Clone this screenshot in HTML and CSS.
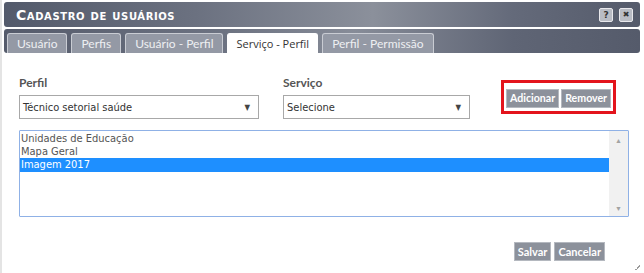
FILE: index.html
```html
<!DOCTYPE html>
<html lang="pt-BR">
<head>
<meta charset="utf-8">
<title>Cadastro de usuários</title>
<link rel="stylesheet" href="styles.css">
</head>
<body>
<div class="window">
  <div class="titlebar">
    <span class="title">Cadastro de usuários</span>
    <div class="tb-buttons">
      <span class="tb-btn">?</span>
      <span class="tb-btn tb-close">✖</span>
    </div>
  </div>
  <div class="tabbar">
    <span class="tab">Usuário</span>
    <span class="tab">Perfis</span>
    <span class="tab">Usuário - Perfil</span>
    <span class="tab active">Serviço - Perfil</span>
    <span class="tab">Perfil - Permissão</span>
  </div>
  <div class="content">
    <div class="form-row">
      <div class="field field-perfil">
        <label class="label">Perfil</label>
        <div class="select"><span>Técnico setorial saúde</span><span class="arrow">▼</span></div>
      </div>
      <div class="field field-servico">
        <label class="label">Serviço</label>
        <div class="select"><span>Selecione</span><span class="arrow">▼</span></div>
      </div>
      <div class="highlight-box">
        <span class="btn">Adicionar</span>
        <span class="btn">Remover</span>
      </div>
    </div>
    <div class="listbox">
      <div class="items">
        <div class="item">Unidades de Educação</div>
        <div class="item">Mapa Geral</div>
        <div class="item selected">Imagem 2017</div>
      </div>
      <div class="scrollbar">
        <span class="sb-arrow">▲</span>
        <span class="sb-arrow">▼</span>
      </div>
    </div>
    <div class="footer">
      <span class="btn">Salvar</span>
      <span class="btn">Cancelar</span>
    </div>
  </div>
  <div class="grip"></div>
</div>
</body>
</html>
```
FILE: styles.css
```css
html, body {
  margin: 0;
  padding: 0;
  background: #ffffff;
}
body {
  width: 644px;
  height: 273px;
  overflow: hidden;
  font-family: Lato, "Open Sans", sans-serif;
}
.window {
  position: relative;
  padding: 2px 4px 0 2px;
  border-left: 2px solid #e4e4e4;
  box-sizing: border-box;
  height: 273px;
}
.titlebar {
  height: 25px;
  border-radius: 3px;
  background: linear-gradient(90deg, #535a6b 0%, #6b7180 30%, #8b909b 58%, #646a7a 80%, #555b6b 100%);
  display: flex;
  align-items: center;
  justify-content: space-between;
  padding: 0 7px 0 12px;
  box-sizing: border-box;
}
.title {
  font-family: "DejaVu Sans", sans-serif;
  font-weight: bold;
  font-variant: small-caps;
  font-size: 14px;
  color: #ffffff;
  letter-spacing: 0.6px;
}
.tb-buttons {
  display: flex;
  gap: 6px;
}
.tb-btn {
  width: 12px;
  height: 12px;
  border: 1px solid #e8e8ec;
  border-radius: 2px;
  background: #b9bcc4;
  color: #333;
  font-family: "DejaVu Sans", sans-serif;
  font-weight: bold;
  font-size: 9px;
  line-height: 12px;
  text-align: center;
}
.tb-close {
  font-size: 8px;
}
.tabbar {
  margin-top: 2px;
  height: 24px;
  border-radius: 3px;
  background: linear-gradient(90deg, #555b6b 0%, #6d7382 35%, #878c98 55%, #5f6575 80%, #555b6b 100%);
  display: flex;
  align-items: flex-end;
  gap: 4px;
  padding-left: 3px;
}
.tab {
  height: 19px;
  padding: 0 9px;
  border: 1px solid #c9ccd3;
  border-bottom: none;
  border-radius: 3px 3px 0 0;
  background: #9499a5;
  color: #eeeff2;
  font-size: 12px;
  line-height: 19px;
}
.tab.active {
  background: #ffffff;
  color: #333333;
  height: 21px;
  margin-bottom: -2px;
  padding: 0 8px;
  border-color: #ffffff;
  font-family: "Open Sans", sans-serif;
  font-size: 11px;
}
.content {
  padding: 23px 0 0 15px;
}
.form-row {
  display: flex;
  align-items: flex-start;
}
.field {
  display: flex;
  flex-direction: column;
}
.field-perfil {
  width: 240px;
}
.field-servico {
  width: 187px;
  margin-left: 24px;
}
.label {
  font-weight: bold;
  font-size: 12px;
  color: #555555;
  height: 19px;
  line-height: 14px;
}
.select {
  height: 22px;
  border: 1px solid #a8a8a8;
  display: flex;
  align-items: center;
  justify-content: space-between;
  padding: 0 8px 0 3px;
  font-family: "DejaVu Sans", sans-serif;
  font-stretch: condensed;
  font-size: 11px;
  color: #333333;
}
.arrow {
  font-size: 8px;
  color: #444;
}
.highlight-box {
  margin-left: 31px;
  margin-top: 4px;
  border: 3px solid #e3141c;
  padding: 6px 2px 3px 2px;
  display: flex;
  gap: 2px;
}
.btn {
  height: 19px;
  padding: 0 3px;
  background: #8c919b;
  border: 1px solid #b4b8bf;
  box-sizing: border-box;
  color: #ffffff;
  font-weight: bold;
  font-size: 11px;
  line-height: 17px;
}
.highlight-box .btn {
  font-size: 10.6px;
}
.listbox {
  margin-top: 11px;
  width: 610px;
  height: 87px;
  border: 1px solid #8fb1e6;
  box-sizing: border-box;
  display: flex;
  border-radius: 1px;
}
.items {
  flex: 1;
  padding-top: 1px;
  font-family: "DejaVu Sans", sans-serif;
  font-stretch: condensed;
  font-size: 11px;
  color: #555555;
}
.item {
  height: 13px;
  line-height: 13px;
  padding-left: 1px;
}
.item.selected {
  background: #1e8fff;
  color: #ffffff;
  height: 14px;
  line-height: 14px;
}
.scrollbar {
  width: 19px;
  background: #f1f1f1;
  display: flex;
  flex-direction: column;
  justify-content: space-between;
  align-items: center;
  padding: 5px 0 4px;
  box-sizing: border-box;
}
.sb-arrow {
  font-size: 7px;
  color: #a3a3a3;
  line-height: 8px;
}
.footer {
  display: flex;
  justify-content: flex-end;
  gap: 3px;
  width: 586px;
  margin-top: 25px;
}
.grip {
  position: absolute;
  right: 4px;
  bottom: 3px;
  width: 5px;
  height: 5px;
  background: linear-gradient(135deg, transparent 50%, #9a9a9a 50%, #9a9a9a 65%, transparent 65%);
}
```
